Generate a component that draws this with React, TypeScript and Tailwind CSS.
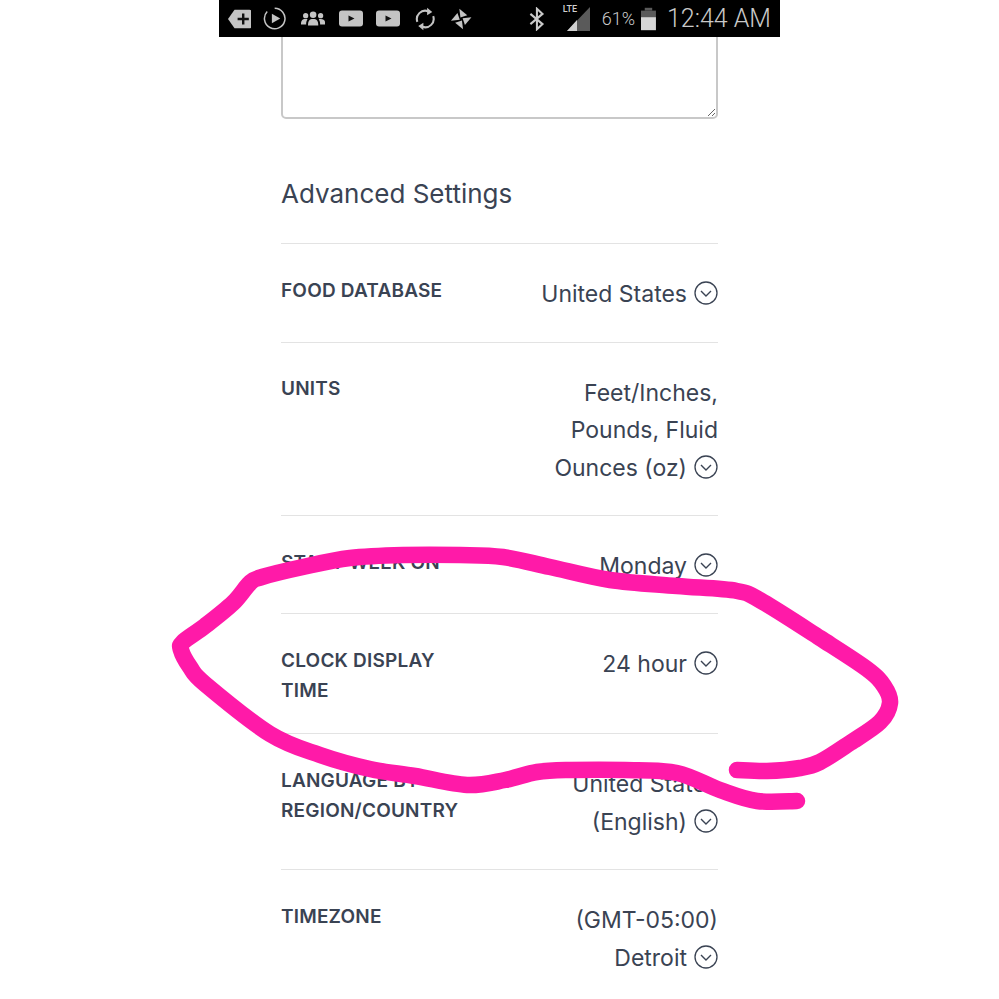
import React from "react";

const INK = "text-[#3a4353]";

// hand-drawn marker stroke over the screenshot, as centre line points
const scribble = [
  [737, 770], [767, 771], [800, 768], [820, 762], [850, 743], [880, 722], [890, 703], [884, 686], [867, 669],
  [820, 638], [763, 602], [737, 591], [677, 586], [610, 580], [550, 567], [503, 557], [460, 555], [403, 555],
  [350, 558], [303, 567], [262, 577], [250, 583], [233, 603], [205, 626], [183, 642], [181, 650], [190, 667], [205, 684],
  [270, 734], [320, 755], [370, 769], [415, 776], [467, 785], [505, 780], [537, 772], [570, 770],
  [625, 770], [677, 773], [720, 790], [757, 801], [797, 801],
];

const smoothPath = (pts: number[][]) => {
  let d = `M${pts[0][0]} ${pts[0][1]}`;
  for (let i = 0; i < pts.length - 1; i++) {
    const p0 = pts[i - 1] || pts[i];
    const p1 = pts[i];
    const p2 = pts[i + 1];
    const p3 = pts[i + 2] || p2;
    d += ` C${p1[0] + (p2[0] - p0[0]) / 6} ${p1[1] + (p2[1] - p0[1]) / 6} ${p2[0] - (p3[0] - p1[0]) / 6} ${p2[1] - (p3[1] - p1[1]) / 6} ${p2[0]} ${p2[1]}`;
  }
  return d;
};

const Chevron = () => (
  <svg width="24" height="24" viewBox="0 0 24 24" fill="none" stroke="#3a4353" className="inline-block ml-[7px] align-[-3px]">
    <circle cx="12" cy="12" r="11" strokeWidth="1.3" />
    <path d="M7 10l5 5 5-5" strokeWidth="1.4" />
  </svg>
);

const YouTube = () => (
  <svg width="24" height="17" viewBox="0 0 24 17">
    <rect width="24" height="16" y="0.5" rx="3" fill="#c4c4c4" />
    <path d="M9.500 5.500l6 3-6 3z" fill="#111" />
  </svg>
);

const StatusBar = () => (
  <div className="h-[37px] bg-black flex items-center pl-[9px] pr-[9px] text-[#c9c9c9] font-['Roboto',sans-serif]">
    <svg width="25" height="20" viewBox="0 0 25 20" className="mr-[12px]">
      <path d="M7 0h16a2 2 0 0 1 2 2v16a2 2 0 0 1-2 2H7L0 10z" fill="#c4c4c4" />
      <path d="M15 4h2.600v4.700h4.700v2.600h-4.700V16H15v-4.700h-4.700V8.700H15z" fill="#111" />
    </svg>
    <svg width="25" height="25" viewBox="0 0 25 25" fill="none" className="mr-[14px]">
      <path d="M12.500 1.500a11 11 0 1 1-8 3.500" stroke="#c4c4c4" strokeWidth="1.600" />
      <path d="M9.500 7.500l9 5-9 5z" fill="#c4c4c4" />
    </svg>
    <svg width="26" height="15" viewBox="0 0 26 15" fill="#c4c4c4" className="mr-[14px]">
      <circle cx="13" cy="3.500" r="3.500" />
      <path d="M7.500 15c0-5 1.500-7 5.500-7s5.500 2 5.500 7z" />
      <circle cx="5" cy="4.500" r="2.800" />
      <path d="M0 14c0-4 1-6 5-6 1 0 1.500.2 2 .4C5.800 10 5.500 12 5.500 14z" />
      <circle cx="21" cy="4.500" r="2.800" />
      <path d="M26 14c0-4-1-6-5-6-1 0-1.500.2-2 .4 1.200 1.600 1.500 3.600 1.500 5.600z" />
    </svg>
    <div className="mr-[13px] flex"><YouTube /></div>
    <div className="mr-[15px] flex"><YouTube /></div>
    <svg width="22" height="24" viewBox="0 0 22 24" fill="none" stroke="#c4c4c4" strokeWidth="2.200" className="mr-[15px]">
      <path d="M2.500 15A9 9 0 0 1 14 3.600" />
      <path d="M19.500 9a9 9 0 0 1-11.500 11.400" />
      <path d="M13 0l5.500 4.500L13 8z" fill="#c4c4c4" stroke="none" />
      <path d="M9 24l-5.500-4.500L9 16z" fill="#c4c4c4" stroke="none" />
    </svg>
    <svg width="24" height="24" viewBox="0 0 24 24" fill="#c4c4c4" className="mr-[56px]">
      <path d="M10 1l1.200 9.500L18.500 8z" />
      <path d="M10 1l1.200 9.500L18.500 8z" transform="rotate(90 12 12)" />
      <path d="M10 1l1.200 9.500L18.500 8z" transform="rotate(180 12 12)" />
      <path d="M10 1l1.200 9.500L18.500 8z" transform="rotate(270 12 12)" />
    </svg>
    <svg width="17" height="24" viewBox="0 0 17 24" fill="none" stroke="#c9c9c9" strokeWidth="2.200" className="mr-[21px]">
      <path d="M1.500 6.500l13 11L8.500 23V1l6 5.500-13 11" />
    </svg>
    <div className="relative w-[25px] h-[25px] mr-[11px]">
      <svg width="25" height="25" viewBox="0 0 25 25">
        <path d="M24 1v24H1z" fill="#5a5a5a" />
        <path d="M11 14v11H1z" fill="#d0d0d0" />
      </svg>
      <span className="absolute left-[-3px] top-[-2px] text-[9px] leading-[10px] font-medium text-[#d0d0d0]">LTE</span>
    </div>
    <span className="text-[18px] font-light mr-[6px] leading-none">61%</span>
    <svg width="16" height="24" viewBox="0 0 16 24" className="mr-[11px]">
      <path d="M4 0h8v3H4z" fill="#5a5a5a" />
      <path d="M0 3h16v7H0z" fill="#5a5a5a" />
      <path d="M0 10h16v14H0z" fill="#d6d6d6" />
    </svg>
    <span className="text-[25px] font-light leading-none whitespace-nowrap">12:44 AM</span>
  </div>
);

const Row = ({ label, value, className = "pb-[30px]" }: { label: React.ReactNode; value: React.ReactNode; className?: string }) => (
  <div className={`flex justify-between border-b border-[#e3e3e3] pt-[30px] ${className}`}>
    <div className={`pt-[1.500px] -mb-[2.500px] text-[19px] tracking-[0.01em] leading-[30px] font-semibold ${INK}`}>{label}</div>
    <div className={`pt-[2px] -mb-[2px] text-right text-[23px] leading-[37.500px] ${INK}`}>
      {value}
      <Chevron />
    </div>
  </div>
);

export default function App() {
  return (
    <div className="relative h-[999px] overflow-hidden bg-white font-['Inter',sans-serif]">
      <div className="ml-[219px] w-[561px]">
        <StatusBar />
        <div className="px-[62px]">
          <div className="h-[82px] flex items-end overflow-hidden">
            <textarea className="block w-full h-[120px] shrink-0 rounded-[5px] border-2 border-[#c8c8c8] bg-white" />
          </div>
          <h2 className={`mt-[55px] mb-[29px] text-[26px] leading-[40px] font-normal ${INK}`}>Advanced Settings</h2>
          <div className="border-t border-[#e3e3e3]">
            <Row label="FOOD DATABASE" value="United States" />
            <Row
              label="UNITS"
              value={
                <>
                  Feet/Inches,
                  <br />
                  Pounds, Fluid
                  <br />
                  Ounces (oz)
                </>
              }
            />
            <Row label="START WEEK ON" value="Monday" className="pb-[29.500px]" />
            <Row
              label={
                <>
                  CLOCK DISPLAY
                  <br />
                  TIME
                </>
              }
              value="24 hour"
            />
            <Row
              label={
                <>
                  LANGUAGE BY
                  <br />
                  REGION/COUNTRY
                </>
              }
              value={
                <>
                  United States
                  <br />
                  (English)
                </>
              }
            />
            <Row
              label="TIMEZONE"
              value={
                <>
                  (GMT-05:00)
                  <br />
                  Detroit
                </>
              }
            />
          </div>
        </div>
      </div>
      <svg width="999" height="999" viewBox="0 0 999 999" fill="none" className="absolute inset-0 pointer-events-none">
        <path d={smoothPath(scribble)} stroke="#ff1aa8" strokeWidth="16.500" strokeLinecap="round" strokeLinejoin="round" />
      </svg>
    </div>
  );
}
